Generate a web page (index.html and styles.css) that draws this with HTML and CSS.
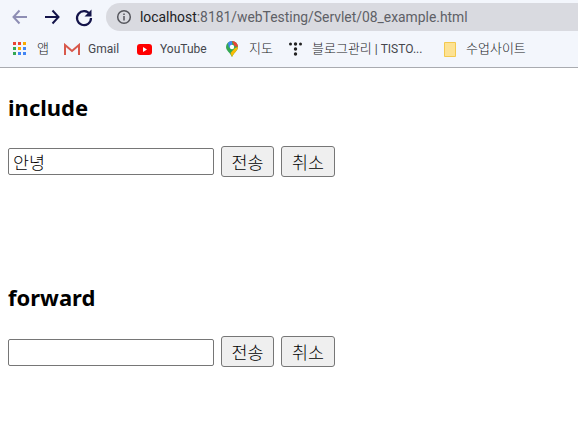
FILE: index.html
```html
<!DOCTYPE html>
<html lang="ko">
<head>
<meta charset="utf-8">
<title>08_example</title>
<link rel="stylesheet" href="styles.css">
</head>
<body>
<header class="chrome">
  <div class="toolbar">
    <svg class="nav" width="24" height="24" viewBox="0 0 24 24"><path d="M19 12H6M11.500 5.500 5.500 12l6 6.500" fill="none" stroke="#8e8eb4" stroke-width="2"/></svg>
    <svg class="nav" width="24" height="24" viewBox="0 0 24 24"><path d="M5 12h13M12.500 5.500 18.500 12l-6 6.500" fill="none" stroke="#14144a" stroke-width="2"/></svg>
    <svg class="nav" width="24" height="24" viewBox="0 0 24 24"><path d="M18 9.500A7 7 0 1 0 19 13" fill="none" stroke="#14144a" stroke-width="2.200"/><path d="M19.500 4.500v7h-7z" fill="#14144a"/></svg>
    <div class="omnibox">
      <svg width="16" height="16" viewBox="0 0 16 16"><circle cx="8" cy="8" r="6.300" fill="none" stroke="#55565c" stroke-width="1.500"/><path d="M8 7v4.500M8 4.500v1.500" stroke="#55565c" stroke-width="1.500"/></svg>
      <span class="url"><span class="host">localhost</span>:8181/webTesting/Servlet/08_example.html</span>
    </div>
  </div>
  <nav class="bookmarks">
    <span class="mark mark-apps">
      <svg width="14" height="14" viewBox="0 0 14 14">
        <rect x="0" y="0" width="3" height="3" fill="#ea4335"/><rect x="5" y="0" width="3" height="3" fill="#ea4335"/><rect x="10" y="0" width="3" height="3" fill="#f9ab00"/>
        <rect x="0" y="5" width="3" height="3" fill="#34a853"/><rect x="5" y="5" width="3" height="3" fill="#f9ab00"/><rect x="10" y="5" width="3" height="3" fill="#4285f4"/>
        <rect x="0" y="10" width="3" height="3" fill="#34a853"/><rect x="5" y="10" width="3" height="3" fill="#4285f4"/><rect x="10" y="10" width="3" height="3" fill="#4285f4"/>
      </svg>
      <span class="ko">앱</span>
    </span>
    <span class="mark mark-gmail">
      <svg width="16" height="13" viewBox="0 0 16 13"><path d="M1 12V2l7 6 7-6v10" fill="none" stroke="#d8594c" stroke-width="2"/></svg>
      <span>Gmail</span>
    </span>
    <span class="mark mark-yt">
      <svg width="15" height="11" viewBox="0 0 15 11"><rect width="15" height="11" rx="3" fill="#f00"/><path d="M6 3l4 2.500L6 8z" fill="#fff"/></svg>
      <span>YouTube</span>
    </span>
    <span class="mark mark-maps">
      <svg width="12" height="16" viewBox="0 0 12 16"><path d="M6 0a6 6 0 0 1 6 6c0 3.500-4 5.500-6 10C4 11.500 0 9.500 0 6a6 6 0 0 1 6-6z" fill="#34a853"/><path d="M2 1.800A6 6 0 0 1 6 0v4L3 7z" fill="#4285f4"/><path d="M6 0a6 6 0 0 1 6 6L8.500 5z" fill="#ea4335"/><path d="M12 6c0 3.500-4 5.500-6 10L4.500 12 9 7z" fill="#fbbc04"/><circle cx="6" cy="6" r="2.200" fill="#fff"/></svg>
      <span class="ko">지도</span>
    </span>
    <span class="mark mark-tistory">
      <svg width="13" height="14" viewBox="0 0 13 14" fill="#222"><circle cx="1.500" cy="2" r="1.500"/><circle cx="6.500" cy="2" r="1.700"/><circle cx="11.500" cy="2" r="1.500"/><circle cx="6.500" cy="7" r="1.700"/><circle cx="6.500" cy="12" r="1.700"/></svg>
      <span><span class="ko">블로그관리</span> | TISTO...</span>
    </span>
    <span class="mark mark-folder">
      <svg width="12" height="15" viewBox="0 0 12 15"><path d="M.5.500h11v14H.5z" fill="#fde293" stroke="#f3c94f"/></svg>
      <span class="ko">수업사이트</span>
    </span>
  </nav>
</header>
<main class="page">
  <section class="block block-include">
    <h2 class="title">include</h2>
    <form class="form">
      <input class="field" type="text" value="안녕">
      <button class="btn" type="button">전송</button>
      <button class="btn btn-wide" type="button">취소</button>
    </form>
  </section>
  <section class="block block-forward">
    <h2 class="title">forward</h2>
    <form class="form">
      <input class="field" type="text">
      <button class="btn" type="button">전송</button>
      <button class="btn btn-wide" type="button">취소</button>
    </form>
  </section>
</main>
</body>
</html>
```
FILE: styles.css
```css
* { box-sizing: border-box; }
html, body { margin: 0; padding: 0; }
body {
  width: 578px;
  height: 446px;
  overflow: hidden;
  background: #fff;
  font-family: "Noto Sans CJK KR", "Noto Sans", sans-serif;
}
.chrome {
  height: 68px;
  background: #f3f6fc;
  border-bottom: 1px solid #a9abb0;
}
.toolbar {
  height: 33px;
  padding: 3px 0 0 8px;
  display: flex;
  align-items: flex-start;
}
.nav { margin: 2px 8px 0 0; flex: none; }
.omnibox {
  flex: 1;
  height: 28px;
  margin-left: 2px;
  padding-left: 10px;
  background: #d9dae0;
  border-radius: 14px 0 0 14px;
  display: flex;
  align-items: center;
  gap: 8px;
}
.url {
  font: 13.88px/28px Roboto, sans-serif;
  color: #5e6066;
  white-space: nowrap;
}
.host { color: #202124; }
.bookmarks {
  height: 34px;
  font: 12px/16px Roboto, "Noto Sans CJK KR", sans-serif;
  color: #45474d;
  display: flex;
  align-items: center;
  padding: 0 0 2px 13px;
}
.mark {
  display: flex;
  align-items: center;
  white-space: nowrap;
  flex: none;
}
.ko { font-size: 13px; font-weight: 300; color: #202124; }
.mark-apps { width: 51px; gap: 10px; }
.mark-gmail { width: 73px; gap: 8px; }
.mark-yt { width: 89px; gap: 8px; }
.mark-maps { width: 63px; gap: 11px; }
.mark-tistory { width: 155px; gap: 10px; }
.mark-folder { gap: 10px; }
.page {
  padding: 0 8px;
}
.block-include { padding-top: 24px; height: 214px; }
.title {
  margin: 0;
  font: bold 22px/30px "Noto Sans", "Open Sans", sans-serif;
  color: #000;
}
.form {
  margin-top: 24px;
  display: flex;
  align-items: center;
  gap: 7px;
}
.field {
  width: 206px;
  height: 27px;
  padding: 1px 2px 1px 4px;
  border: 1px solid #767676;
  border-radius: 2px;
  background: #fff;
  font: 300 17.4px "Noto Sans CJK KR", sans-serif;
  color: #000;
  outline: none;
}
.block-forward .field { margin-top: 2px; }
.btn {
  width: 53px;
  height: 31px;
  padding: 0;
  border: 1px solid #767676;
  border-radius: 3px;
  background: #efefef;
  font: 300 17.4px "Noto Sans CJK KR", sans-serif;
  color: #000;
}
.btn-wide { width: 54px; }
```
